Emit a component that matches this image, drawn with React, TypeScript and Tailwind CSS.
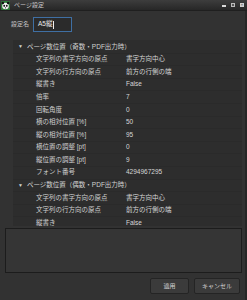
import React from "react";

type Row = { name: string; value?: string; category?: boolean };

const rows: Row[] = [
  { name: "ページ数位置（奇数・PDF出力時）", category: true },
  { name: "文字列の書字方向の原点", value: "書字方向中心" },
  { name: "文字列の行方向の原点", value: "前方の行側の端" },
  { name: "縦書き", value: "False" },
  { name: "倍率", value: "7" },
  { name: "回転角度", value: "0" },
  { name: "横の相対位置 [%]", value: "50" },
  { name: "縦の相対位置 [%]", value: "95" },
  { name: "横位置の調整 [pt]", value: "0" },
  { name: "縦位置の調整 [pt]", value: "9" },
  { name: "フォント番号", value: "4294967295" },
  { name: "ページ数位置（偶数・PDF出力時）", category: true },
  { name: "文字列の書字方向の原点", value: "書字方向中心" },
  { name: "文字列の行方向の原点", value: "前方の行側の端" },
  { name: "縦書き", value: "False" },
];

function AppIcon() {
  return (
    <svg width="9" height="9" viewBox="0 0 9 9">
      <rect width="9" height="9" rx="1" fill="#2f7a3a" />
      <circle cx="4.5" cy="5" r="3.3" fill="#f2f2f2" />
      <circle cx="1.8" cy="2" r="1.3" fill="#111" />
      <circle cx="7.2" cy="2" r="1.3" fill="#111" />
      <ellipse cx="3.2" cy="4.8" rx="0.9" ry="1.1" fill="#111" />
      <ellipse cx="5.8" cy="4.8" rx="0.9" ry="1.1" fill="#111" />
      <circle cx="4.5" cy="6.8" r="0.6" fill="#111" />
    </svg>
  );
}

function PropRow({ row }: { row: Row }) {
  if (row.category) {
    return (
      <div className="flex h-[12.6px] shrink-0 items-center border-b border-[#2a2a2a] pl-[5px] text-[#d2d2d2]">
        <span className="w-[9px] text-[5px] leading-none">▼</span>
        <span>{row.name}</span>
      </div>
    );
  }
  return (
    <div className="flex h-[12.6px] shrink-0 items-center border-b border-[#2a2a2a]">
      <span className="w-[113px] shrink-0 pl-[23px] text-[#cfcfcf]">{row.name}</span>
      <span className="text-[#d6d6d6]">{row.value}</span>
    </div>
  );
}

export default function App() {
  return (
    <div className="flex h-[300px] w-[247px] flex-col overflow-hidden bg-[#323232] font-['Liberation_Sans','Noto_Sans_CJK_JP',sans-serif] text-[6.5px] leading-none">
      {/* title bar */}
      <div className="flex h-[11px] shrink-0 items-center border-b border-[#1f1f1f] bg-gradient-to-b from-[#3d3d3d] to-[#272727] pl-[1px] pr-[3px]">
        <AppIcon />
        <span className="ml-[4px] text-[6px] text-[#c8c8c8]">ページ設定</span>
        <div className="ml-auto flex items-center gap-[5px]">
          <span className="mt-[2px] h-[1.5px] w-[4px] bg-[#d8d8d8]" />
          <span className="h-[4px] w-[4px] border border-[#bbbbbb] bg-[#555]" />
          <span className="flex h-[4px] w-[4px] items-center justify-center bg-[#cfcfcf] text-[4px] text-[#333]">×</span>
        </div>
      </div>

      <div className="flex min-h-0 flex-1">
        <div className="flex min-w-0 flex-1 flex-col pl-[5px] pr-[3px]">
          {/* name row */}
          <div className="flex h-[29px] shrink-0 items-start gap-[4px] pl-[6px] pt-[6px]">
            <span className="mt-[4px] text-[6px] text-[#c6c6c6]">設定名</span>
            <div className="flex h-[15px] w-[39px] items-center border border-[#3f6fa3] bg-[#2b2b2b] pl-[4px] text-[#e8e8e8]">
              <span>A5縦</span>
              <span className="ml-[0.5px] h-[8px] w-[1px] bg-[#eeeeee]" />
            </div>
          </div>

          {/* property grid */}
          <div className="ml-[8px] flex h-[186px] shrink-0 flex-col overflow-hidden bg-[#2d2d2d] pt-[1px]">
            {rows.map((r, i) => (
              <PropRow key={i} row={r} />
            ))}
          </div>

          {/* description */}
          <div className="mt-[2px] h-[45px] shrink-0 border border-[#1c1c1c] bg-[#353535]" />

          {/* buttons */}
          <div className="flex shrink-0 justify-end gap-[5px] pr-[2px] pt-[5px]">
            <button className="flex h-[16px] w-[39px] items-center justify-center rounded-[2px] border border-[#242424] bg-[#3b3b3b] text-[6px] text-[#d4d4d4]">
              適用
            </button>
            <button className="flex h-[16px] w-[46px] items-center justify-center rounded-[2px] border border-[#242424] bg-[#3b3b3b] text-[6px] text-[#d4d4d4]">
              キャンセル
            </button>
          </div>
        </div>
        <div className="w-[2px] shrink-0 bg-[#262626]" />
      </div>
    </div>
  );
}
